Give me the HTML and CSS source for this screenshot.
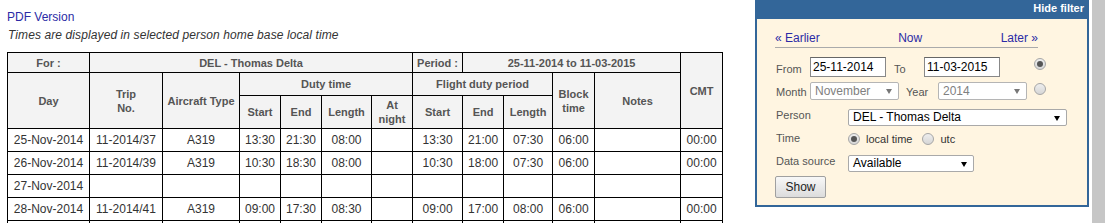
FILE: index.html
```html
<!DOCTYPE html>
<html>
<head>
<meta charset="utf-8">
<title>Duty times</title>
<link rel="stylesheet" href="styles.css">
</head>
<body>
<div class="page">
  <div class="main">
    <div class="pdf"><a href="#" class="link">PDF Version</a></div>
    <div class="note">Times are displayed in selected person home base local time</div>
    <table class="duty">
      <colgroup>
        <col style="width:82px"><col style="width:73px"><col style="width:77px">
        <col style="width:41px"><col style="width:41px"><col style="width:50px"><col style="width:41px">
        <col style="width:50px"><col style="width:41px"><col style="width:49px">
        <col style="width:42px"><col style="width:86px"><col style="width:42px">
      </colgroup>
      <tr class="h1">
        <th>For :</th>
        <th colspan="6">DEL - Thomas Delta</th>
        <th>Period :</th>
        <th colspan="4">25-11-2014 to 11-03-2015</th>
        <th rowspan="3">CMT</th>
      </tr>
      <tr class="h2">
        <th rowspan="2">Day</th>
        <th rowspan="2">Trip<br>No.</th>
        <th rowspan="2">Aircraft Type</th>
        <th colspan="4">Duty time</th>
        <th colspan="3">Flight duty period</th>
        <th rowspan="2">Block<br>time</th>
        <th rowspan="2">Notes</th>
      </tr>
      <tr class="h3">
        <th>Start</th><th>End</th><th>Length</th><th>At<br>night</th>
        <th>Start</th><th>End</th><th>Length</th>
      </tr>
      <tr class="row">
        <td>25-Nov-2014</td><td>11-2014/37</td><td>A319</td>
        <td>13:30</td><td>21:30</td><td>08:00</td><td></td>
        <td>13:30</td><td>21:00</td><td>07:30</td><td>06:00</td><td></td><td>00:00</td>
      </tr>
      <tr class="row">
        <td>26-Nov-2014</td><td>11-2014/39</td><td>A319</td>
        <td>10:30</td><td>18:30</td><td>08:00</td><td></td>
        <td>10:30</td><td>18:00</td><td>07:30</td><td>06:00</td><td></td><td>00:00</td>
      </tr>
      <tr class="row">
        <td>27-Nov-2014</td><td></td><td></td>
        <td></td><td></td><td></td><td></td>
        <td></td><td></td><td></td><td></td><td></td><td></td>
      </tr>
      <tr class="row">
        <td>28-Nov-2014</td><td>11-2014/41</td><td>A319</td>
        <td>09:00</td><td>17:30</td><td>08:30</td><td></td>
        <td>09:00</td><td>17:00</td><td>08:00</td><td>06:00</td><td></td><td>00:00</td>
      </tr>
      <tr class="row">
        <td></td><td></td><td></td>
        <td></td><td></td><td></td><td></td>
        <td></td><td></td><td></td><td></td><td></td><td></td>
      </tr>
    </table>
  </div>

  <div class="filter">
    <div class="filter-head">Hide filter</div>
    <div class="filter-body">
      <div class="nav">
        <a href="#" class="link">« Earlier</a>
        <a href="#" class="link">Now</a>
        <a href="#" class="link">Later »</a>
      </div>
      <div class="frow r-from">
        <span class="lbl w35">From</span>
        <span class="input">25-11-2014</span>
        <span class="lbl w31 ml7">To</span>
        <span class="input">11-03-2015</span>
        <span class="radio checked ml34"></span>
      </div>
      <div class="frow r-month">
        <span class="lbl w35">Month</span>
        <span class="select disabled w89">November<span class="arrow"></span></span>
        <span class="lbl w33 ml6">Year</span>
        <span class="select disabled w89">2014<span class="arrow"></span></span>
        <span class="radio ml7"></span>
      </div>
      <div class="frow r-person">
        <span class="lbl w73">Person</span>
        <span class="select w219">DEL - Thomas Delta<span class="arrow"></span></span>
      </div>
      <div class="frow r-time">
        <span class="lbl w73">Time</span>
        <span class="radio checked"></span><span class="opt">local time</span>
        <span class="radio ml10"></span><span class="opt">utc</span>
      </div>
      <div class="frow r-source">
        <span class="lbl w73">Data source</span>
        <span class="select w126">Available<span class="arrow"></span></span>
      </div>
      <div class="frow r-show">
        <span class="button">Show</span>
      </div>
    </div>
  </div>
  <div class="scroll"></div>
</div>
</body>
</html>
```
FILE: styles.css
```css
html, body {
  margin: 0;
  padding: 0;
  height: 223px;
  overflow: hidden;
  background: #fff;
  font-family: "Liberation Sans", Arial, sans-serif;
}

.page {
  display: flex;
  height: 223px;
}

.main {
  width: 716px;
  padding-left: 7px;
}

.link {
  color: #2b2ba6;
  text-decoration: none;
  font-size: 12px;
}

.pdf {
  padding-top: 8px;
  line-height: 16px;
  height: 16px;
}

.note {
  margin-top: 3px;
  line-height: 16px;
  font-size: 12px;
  font-style: italic;
  letter-spacing: 0.1px;
  color: #333;
  padding-left: 1px;
}

.duty {
  margin-top: 9px;
  border-collapse: collapse;
  table-layout: fixed;
  width: 716px;
}

.duty th,
.duty td {
  border: 1px solid #000;
  padding: 0 2px;
  text-align: center;
  white-space: nowrap;
}

.duty th {
  background: #f3f3f3;
  color: #555;
  font-size: 11px;
  font-weight: bold;
  line-height: 14px;
}

.duty td {
  font-size: 12px;
  color: #333;
  line-height: 14px;
}

.duty .h1 { height: 20px; }
.duty .h2 { height: 23px; }
.duty .h3 { height: 33px; }
.duty .row { height: 23px; }

/* filter panel */
.filter {
  margin-left: 32px;
  width: 330px;
  height: 205px;
  padding: 0 2px 2px;
  background: #336699;
  display: flex;
  flex-direction: column;
}

.filter-head {
  height: 19px;
  line-height: 17px;
  text-align: right;
  padding-right: 3px;
  color: #fff;
  font-size: 11px;
  font-weight: bold;
}

.filter-body {
  flex: 1;
  background: #fff5e1;
  padding: 11px 0 0 18px;
}

.nav {
  width: 263px;
  height: 17px;
  line-height: 16px;
  display: flex;
  justify-content: space-between;
  border-bottom: 1px solid #aaa;
}

.frow {
  display: flex;
  align-items: center;
}

.r-from { margin-top: 9px; height: 20px; }
.r-month { margin-top: 5px; height: 18px; }
.r-person { margin-top: 9px; height: 17px; }
.r-time { margin-top: 6px; height: 13px; }
.r-source { margin-top: 10px; height: 17px; }
.r-show { margin-top: 4px; height: 22px; }

.lbl {
  font-size: 11px;
  color: #555;
  padding-left: 1px;
  box-sizing: border-box;
}

.r-from .lbl, .r-month .lbl { align-self: flex-end; line-height: 14px; margin-bottom: 1px; }
.r-person .lbl, .r-time .lbl, .r-source .lbl { align-self: flex-start; line-height: 14px; margin-top: -1px; }

.w35 { width: 35px; }
.w31 { width: 31px; }
.w33 { width: 33px; }
.w73 { width: 73px; }
.ml6 { margin-left: 6px; }
.ml7 { margin-left: 7px; }
.ml10 { margin-left: 10px; }
.ml34 { margin-left: 34px; }

.input {
  box-sizing: border-box;
  width: 76px;
  height: 20px;
  border: 1px solid #888;
  border-top-color: #666;
  background: #fff;
  color: #000;
  font-size: 12px;
  line-height: 18px;
  padding-left: 2px;
}

.select {
  position: relative;
  box-sizing: border-box;
  height: 18px;
  border: 1px solid #a9a9a9;
  border-radius: 2px;
  background: #fff;
  color: #000;
  font-size: 12px;
  line-height: 16px;
  padding-left: 4px;
}

.r-person .select, .r-source .select { height: 17px; line-height: 15px; }

.select.disabled {
  color: #808080;
  border-color: #b5b5b5;
}

.w89 { width: 89px; }
.w219 { width: 219px; }
.w126 { width: 126px; }

.arrow {
  position: absolute;
  right: 6px;
  top: 50%;
  margin-top: -2px;
  width: 0;
  height: 0;
  border-left: 3.5px solid transparent;
  border-right: 3.5px solid transparent;
  border-top: 5px solid #000;
}

.select.disabled .arrow {
  border-top-color: #777;
}

.radio {
  box-sizing: border-box;
  width: 12px;
  height: 12px;
  border-radius: 50%;
  border: 1px solid #a6a6a6;
  background: linear-gradient(#eeeeee, #d6d6d6);
  display: inline-flex;
  align-items: center;
  justify-content: center;
  flex: none;
}

.radio.checked::after {
  content: "";
  width: 6px;
  height: 6px;
  border-radius: 50%;
  background: #555;
}

.r-from .radio { align-self: flex-start; margin-top: 1px; }
.r-month .radio { align-self: flex-start; margin-top: 1px; }

.opt {
  font-size: 11px;
  color: #333;
  margin-left: 6px;
  line-height: 13px;
  padding-top: 2px;
}

.button {
  box-sizing: border-box;
  width: 51px;
  height: 22px;
  border: 1px solid #a0a0a0;
  border-radius: 2px;
  background: linear-gradient(#f8f8f8, #dcdcdc);
  color: #222;
  font-size: 12px;
  line-height: 20px;
  text-align: center;
}

.scroll {
  margin-left: 3px;
  width: 13px;
  height: 223px;
  background: #c6c6c6;
}
```
